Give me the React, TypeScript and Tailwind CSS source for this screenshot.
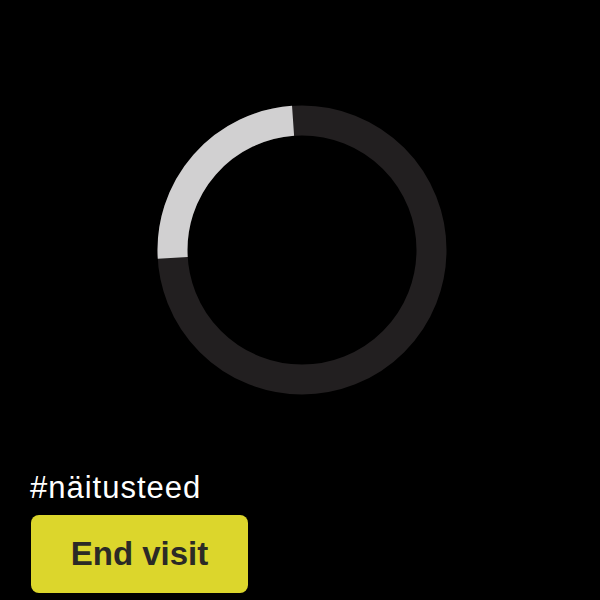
const R = 129.5;
const C = 2 * Math.PI * R;

function ProgressRing({ degrees }: { degrees: number }) {
  const len = (degrees / 360) * C;
  return (
    <svg width="290" height="290" viewBox="0 0 290 290">
      <circle cx="145" cy="145" r={R} fill="none" stroke="#221f20" strokeWidth="30" />
      <circle
        cx="145"
        cy="145"
        r={R}
        fill="none"
        stroke="#d1d0d1"
        strokeWidth="30"
        strokeDasharray={`${len} ${C}`}
        transform="rotate(176.5 145 145)"
      />
    </svg>
  );
}

export default function App() {
  return (
    <div className="w-[600px] h-[600px] bg-black flex flex-col overflow-hidden font-['Liberation_Sans',Arial,sans-serif]">
      {/* timer ring */}
      <div className="pt-[105px] pl-[157px]">
        <ProgressRing degrees={89.5} />
      </div>

      {/* bottom */}
      <div className="mt-[77px] pl-[30px] flex flex-col">
        <p className="text-white text-[31px] leading-none tracking-[1px]">#näitusteed</p>
        <button
          type="button"
          className="mt-[12px] ml-px w-[217px] h-[78px] rounded-lg bg-[#dcd62c] text-[#2b2a26] text-[33px] font-bold flex items-center justify-center"
        >
          End visit
        </button>
      </div>
    </div>
  );
}
